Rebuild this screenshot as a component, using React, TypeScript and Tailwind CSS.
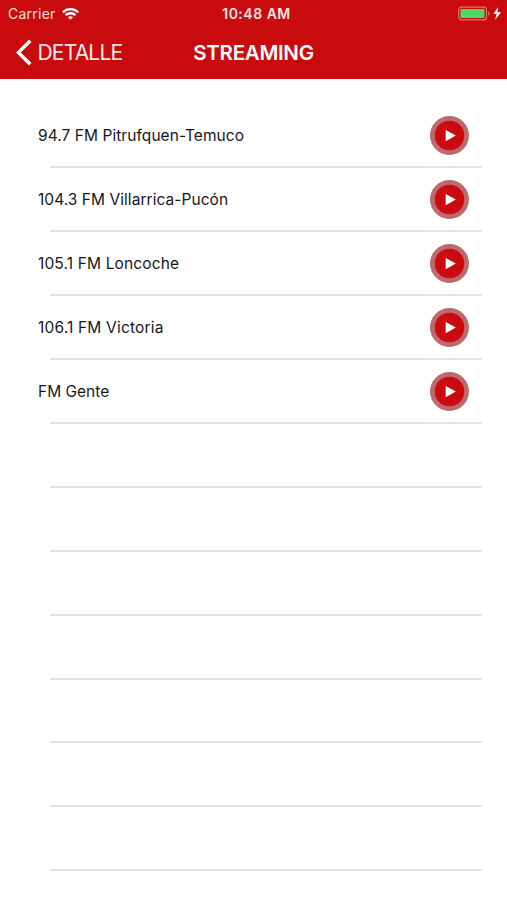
const stations = [
  { name: "94.7 FM Pitrufquen-Temuco", spacing: "tracking-[0.06px]" },
  { name: "104.3 FM Villarrica-Pucón", spacing: "tracking-[0.05px]" },
  { name: "105.1 FM Loncoche", spacing: "tracking-[0.14px]" },
  { name: "106.1 FM Victoria", spacing: "tracking-[0.18px]" },
  { name: "FM Gente", spacing: "tracking-[0px]" },
];

const emptyRows = [0, 1, 2, 3, 4, 5, 6];

function StatusBar() {
  return (
    <div className="grid h-[27px] grid-cols-3 items-center pr-[5px] pl-2 text-[14px] leading-none text-white">
      <div className="flex items-center gap-[6px]">
        <span className="tracking-[0.25px] text-white/85">Carrier</span>
        <svg className="h-3 w-[17px]" viewBox="0 0 17 12" fill="none" stroke="white" strokeWidth="2.3">
          <path d="M.8 4.3C5.3.1 11.7.1 16.2 4.3M3.6 7.2c2.8-2.6 7-2.6 9.8 0" />
          <path d="M8.5 11.8 5.9 9.2c1.5-1.3 3.7-1.3 5.2 0z" fill="white" stroke="none" />
        </svg>
      </div>
      <span className="pl-[3px] text-center font-semibold tracking-[0.5px] whitespace-nowrap text-white/90">10:48 AM</span>
      <svg className="h-[15px] w-11 justify-self-end" viewBox="0 0 44 15" fill="none">
        <rect x=".7" y="1.1" width="27.8" height="12.8" rx="3" stroke="#df7373" strokeWidth="1.2" />
        <rect x="2.5" y="3" width="24" height="9" rx="1" fill="#4cd964" />
        <path d="M30 5.5c2 .5 2 3.5 0 4z" fill="#df7373" />
        <path d="M40 1 35.5 8h3.2L37 14l6-7.7h-3.5z" fill="white" />
      </svg>
    </div>
  );
}

function NavBar() {
  return (
    <nav className="grid h-[50px] grid-cols-[1fr_auto_1fr] items-center text-[21px] leading-none text-white">
      <a className="flex items-center gap-[5.5px] pl-4">
        <svg className="h-[27px] w-4" viewBox="0 0 16 27" fill="none" stroke="white" strokeWidth="3.4">
          <path d="m14.3 1.7-12 11.8 12 11.8" />
        </svg>
        <span className="tracking-[-0.8px] text-white/90">DETALLE</span>
      </a>
      <h1 className="pt-[2px] text-[20.5px] font-semibold tracking-[-0.3px]">STREAMING</h1>
    </nav>
  );
}

function PlayButton() {
  return (
    <button aria-label="Play" className="mr-[13px] size-[39px]">
      <svg viewBox="0 0 39 39" className="size-full">
        <circle cx="19.5" cy="19.5" r="19.5" fill="#bd6a6e" />
        <circle cx="19.5" cy="19.5" r="14.8" fill="#cb0b0f" />
        <path d="M15.7 14v11.2l10.2-5.6z" fill="white" />
      </svg>
    </button>
  );
}

export default function App() {
  return (
    <main className="h-[900px] w-[507px] overflow-hidden bg-white font-['Inter',sans-serif]">
      <header className="h-[79px] bg-[#ca0b0e]">
        <StatusBar />
        <NavBar />
      </header>
      <ul className="pt-[24px] pr-[25px] pl-[38px]">
        {stations.map((station) => (
          <li key={station.name} className="flex h-[63.95px] flex-col">
            <div className="flex h-[63px] shrink-0 items-center justify-between pt-[2px] text-[15.5px] text-[#171717]">
              <span className={station.spacing}>{station.name}</span>
              <PlayButton />
            </div>
            <div className="ml-3 h-[2px] shrink-0 bg-[#e2e2e2]" />
          </li>
        ))}
        {emptyRows.map((row) => (
          <li key={row} className="h-[63.95px] pt-[63px]">
            <div className="ml-3 h-[2px] bg-[#e2e2e2]" />
          </li>
        ))}
      </ul>
    </main>
  );
}
